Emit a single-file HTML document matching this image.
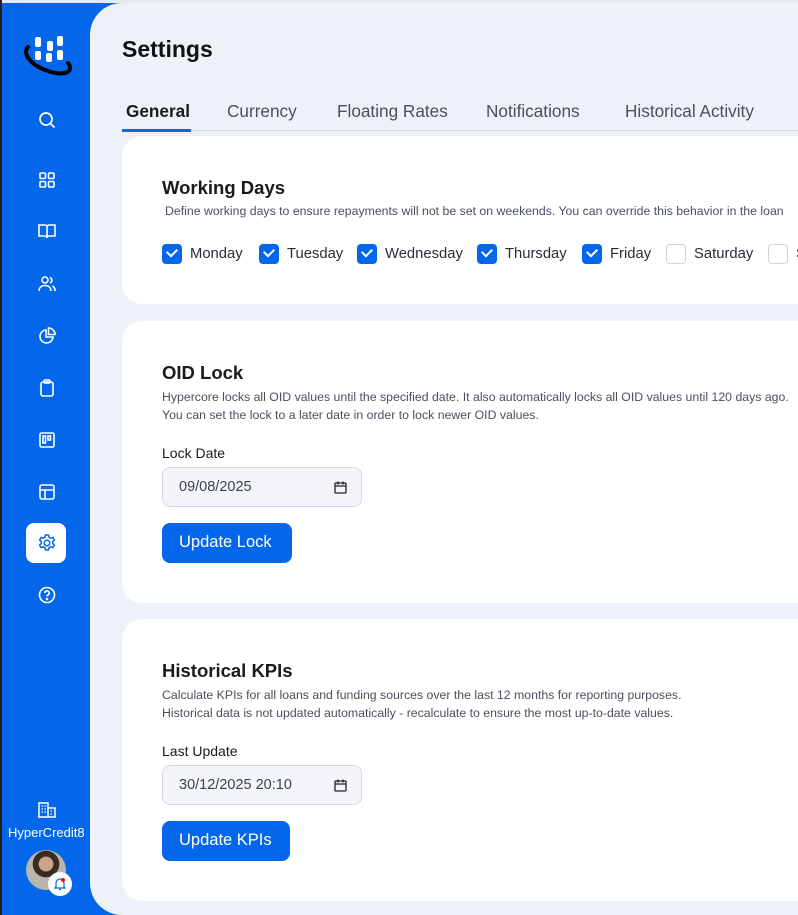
<!DOCTYPE html>
<html><head><style>
*{box-sizing:border-box;margin:0;padding:0}
html,body{width:798px;height:915px;overflow:hidden}
body{background:#0467eb;font-family:"Liberation Sans",sans-serif;position:relative}
#w{position:absolute;left:0;top:0;width:798px;height:915px;overflow:hidden}
.edge{position:absolute;left:0;top:0;width:2px;height:915px;background:#222}
.topl{position:absolute;left:0;top:0;width:798px;height:3px;background:#e8eaf0}
.side{position:absolute;left:2px;top:3px;width:88px;height:912px;background:#0467eb}
.ic{position:absolute;left:34px;width:22px;height:22px}
.main{position:absolute;left:90px;top:3px;width:708px;height:912px;background:#eef1f8;border-top-left-radius:32px;border-bottom-left-radius:32px}
h1{position:absolute;left:122px;top:36px;font-size:23px;font-weight:bold;color:#111}
.tab{position:absolute;top:101px;font-size:17.2px;color:#4a4f5c}
.tabline{position:absolute;left:122px;top:130px;width:676px;height:1px;background:#d5d9e3}
.tabsel{position:absolute;left:122px;top:129px;width:69px;height:3px;background:#0467eb}
.card{position:absolute;left:122px;width:676px;background:#fff;border-radius:20px 0 0 20px;overflow:hidden}
.ct{position:absolute;left:40px;font-size:18.5px;font-weight:bold;color:#1a1a1a}
.cd{position:absolute;left:40px;font-size:12.3px;color:#4a4f5c;line-height:18px;white-space:nowrap}
.cb{position:absolute;top:108px;width:20px;height:20px;border-radius:4px;background:#0467eb}
.cb.off{background:#fff;border:1px solid #cfd3dc}
.cb:not(.off)::after{content:"";position:absolute;left:5px;top:4px;width:8px;height:5px;border-left:2px solid #fff;border-bottom:2px solid #fff;transform:rotate(-45deg)}
.cl{position:absolute;top:108px;font-size:14.8px;color:#2a2d35;line-height:20px}
.lbl{position:absolute;left:40px;font-size:14px;color:#1a1a1a}
.inp{position:absolute;left:40px;width:200px;height:40px;border:1px solid #d3d7e0;border-radius:8px;background:#f4f5fa;font-size:14.5px;color:#3d414c;padding:11px 0 0 16px}
.btn{position:absolute;left:40px;height:40px;border-radius:8px;background:#0467eb;color:#fff;font-size:16.5px;padding:10px 0 0 17px}
</style></head><body><div id="w">
<div class="topl"></div>
<div class="side">
<svg style="position:absolute;left:20px;top:30px" width="52" height="46" viewBox="0 0 52 46"><g fill="#fff"><rect x="13" y="4" width="6" height="10" rx="2"/><rect x="25" y="8" width="6" height="10" rx="2"/><rect x="35" y="3" width="6" height="10" rx="2"/><rect x="24" y="20" width="6" height="9" rx="2"/><rect x="35" y="17" width="6" height="10" rx="2"/><rect x="13" y="18" width="6" height="9" rx="2"/></g><path d="M6 14 C0 20 8 32 26 38 C44 44 52 38 46 30" stroke="#000" stroke-width="4" fill="none" stroke-linecap="round"/></svg>
<svg class="ic" style="top:106px" viewBox="0 0 22 22" fill="none" stroke="#fff" stroke-width="1.7"><circle cx="10" cy="10" r="6"/><path d="M14.5 14.5l4 4"/></svg>
<svg class="ic" style="top:166px" viewBox="0 0 22 22" fill="none" stroke="#fff" stroke-width="1.6"><rect x="4" y="4" width="5.5" height="5.5" rx="1"/><rect x="12.5" y="4" width="5.5" height="5.5" rx="1"/><rect x="4" y="12.5" width="5.5" height="5.5" rx="1"/><rect x="12.5" y="12.5" width="5.5" height="5.5" rx="1"/></svg>
<svg class="ic" style="top:217px" viewBox="0 0 22 22" fill="none" stroke="#fff" stroke-width="1.6"><path d="M3 5h6a2 2 0 0 1 2 2v11a2 2 0 0 0-2-2H3zM19 5h-6a2 2 0 0 0-2 2v11a2 2 0 0 1 2-2h6z"/></svg>
<svg class="ic" style="top:270px" viewBox="0 0 22 22" fill="none" stroke="#fff" stroke-width="1.6"><circle cx="9" cy="7" r="3"/><path d="M3 18c0-3.5 2.5-5.5 6-5.5s6 2 6 5.5M14 4.5a3 3 0 0 1 0 5.5M16.5 13c1.7.8 2.5 2.5 2.5 5"/></svg>
<svg class="ic" style="top:322px" viewBox="0 0 22 22" fill="none" stroke="#fff" stroke-width="1.6"><path d="M10 5a6.5 6.5 0 1 0 7 7h-7z"/><path d="M12.5 3a6.5 6.5 0 0 1 6.5 6.5h-6.5z"/></svg>
<svg class="ic" style="top:374px" viewBox="0 0 22 22" fill="none" stroke="#fff" stroke-width="1.6"><rect x="5" y="5" width="12" height="14" rx="2"/><rect x="8" y="3" width="6" height="3" rx="1"/></svg>
<svg class="ic" style="top:426px" viewBox="0 0 22 22" fill="none" stroke="#fff" stroke-width="1.6"><rect x="4" y="4" width="14" height="14" rx="1.5"/><rect x="7" y="7" width="2.5" height="7"/><rect x="12" y="7" width="2.5" height="4"/></svg>
<svg class="ic" style="top:478px" viewBox="0 0 22 22" fill="none" stroke="#fff" stroke-width="1.6"><rect x="4" y="4" width="14" height="14" rx="2"/><path d="M4 9h14M9 9v9"/></svg>
<div style="position:absolute;left:24px;top:520px;width:40px;height:40px;border-radius:8px;background:#fff"></div>
<svg class="ic" style="top:529px" viewBox="0 0 22 22" fill="none" stroke="#0467eb" stroke-width="1.5"><circle cx="11" cy="11" r="2.8"/><path d="M9.5 3h3l.5 2.2 1.8 1 2.1-.8 1.5 2.6-1.7 1.5v2l1.7 1.5-1.5 2.6-2.1-.8-1.8 1-.5 2.2h-3l-.5-2.2-1.8-1-2.1.8-1.5-2.6 1.700-1.5v-2L3.6 8l1.5-2.6 2.1.8 1.800-1z"/></svg>
<svg class="ic" style="top:581px" viewBox="0 0 22 22" fill="none" stroke="#fff" stroke-width="1.6"><circle cx="11" cy="11" r="7.5"/><path d="M8.8 9a2.2 2.2 0 1 1 3 2c-.6.3-.8.8-.8 1.5"/><circle cx="11" cy="15" r=".5" fill="#fff"/></svg>
<svg class="ic" style="top:796px" viewBox="0 0 22 22" fill="none" stroke="#fff" stroke-width="1.5"><path d="M3 18V4h9v14M12 9h7v9M2 18h18"/><path d="M5.5 7h1.5M8.5 7h1.5M5.5 10h1.5M8.5 10h1.5M5.5 13h1.5M8.5 13h1.5M14.5 12h1.5M14.5 15h1.5" stroke-width="1.3"/></svg>
<div style="position:absolute;left:6px;top:822px;font-size:13px;color:#fff">HyperCredit8</div>
<div style="position:absolute;left:24px;top:847px;width:40px;height:40px;border-radius:50%;background:radial-gradient(circle at 50% 35%,#c9a38a 0 22%,#3a2a22 23% 40%,#b9b4ad 41%)"></div>
<div style="position:absolute;left:46px;top:869px;width:24px;height:24px;border-radius:50%;background:#fff"></div>
<svg style="position:absolute;left:50px;top:873px" width="16" height="16" viewBox="0 0 16 16" fill="none" stroke="#0467eb" stroke-width="1.2"><path d="M4 11V7a4 4 0 0 1 8 0v4l1 1H3zM7 13.5h2"/><circle cx="11" cy="4" r="2" fill="#e11" stroke="none"/></svg>
</div>
<div class="edge"></div>
<div class="main"></div>
<h1>Settings</h1>
<div class="tab" style="left:126px;color:#1a1a1a;font-weight:bold">General</div>
<div class="tab" style="left:227px">Currency</div>
<div class="tab" style="left:337px">Floating Rates</div>
<div class="tab" style="left:486px">Notifications</div>
<div class="tab" style="left:625px">Historical Activity</div>
<div class="tabline"></div><div class="tabsel"></div>

<div class="card" style="top:136px;height:168px">
<div class="ct" style="top:41px">Working Days</div>
<div class="cd" style="top:66px;left:43px">Define working days to ensure repayments will not be set on weekends. You can override this behavior in the loan</div>
<div class="cb" style="left:40px"></div><div class="cl" style="left:68px">Monday</div>
<div class="cb" style="left:137px"></div><div class="cl" style="left:165px">Tuesday</div>
<div class="cb" style="left:235px"></div><div class="cl" style="left:263px">Wednesday</div>
<div class="cb" style="left:355px"></div><div class="cl" style="left:383px">Thursday</div>
<div class="cb" style="left:460px"></div><div class="cl" style="left:488px">Friday</div>
<div class="cb off" style="left:544px"></div><div class="cl" style="left:572px">Saturday</div>
<div class="cb off" style="left:646px"></div><div class="cl" style="left:674px">Sunday</div>
</div>

<div class="card" style="top:321px;height:282px">
<div class="ct" style="top:41px">OID Lock</div>
<div class="cd" style="top:67px">Hypercore locks all OID values until the specified date. It also automatically locks all OID values until 120 days ago.<br>You can set the lock to a later date in order to lock newer OID values.</div>
<div class="lbl" style="top:124px">Lock Date</div>
<div class="inp" style="top:146px">09/08/2025</div>
<div class="btn" style="top:202px;width:130px">Update Lock</div>
</div>

<div class="card" style="top:619px;height:282px">
<div class="ct" style="top:41px">Historical KPIs</div>
<div class="cd" style="top:67px">Calculate KPIs for all loans and funding sources over the last 12 months for reporting purposes.<br>Historical data is not updated automatically - recalculate to ensure the most up-to-date values.</div>
<div class="lbl" style="top:124px">Last Update</div>
<div class="inp" style="top:146px">30/12/2025 20:10</div>
<div class="btn" style="top:202px;width:128px">Update KPIs</div>
</div>
<svg style="position:absolute;left:333px;top:480px" width="15" height="15" viewBox="0 0 15 15" fill="none" stroke="#222" stroke-width="1.3"><rect x="2" y="3" width="11" height="10" rx="1"/><path d="M2 6h11M5 1.5v3M10 1.5v3"/></svg>
<svg style="position:absolute;left:333px;top:778px" width="15" height="15" viewBox="0 0 15 15" fill="none" stroke="#222" stroke-width="1.3"><rect x="2" y="3" width="11" height="10" rx="1"/><path d="M2 6h11M5 1.5v3M10 1.5v3"/></svg>
</div></body></html>
